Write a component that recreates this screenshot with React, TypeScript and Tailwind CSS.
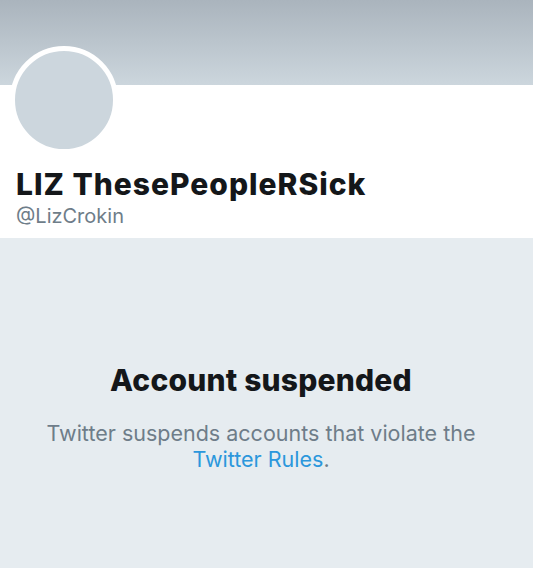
export default function App() {
  return (
    <div className="min-h-[568px] w-full bg-[#e6ecf0] font-['Inter','Liberation_Sans',sans-serif]">
      <div className="h-[85px] bg-gradient-to-b from-[#aab4bd] to-[#ccd6dd]" />

      <div className="flex flex-col items-start bg-white px-[10px] pb-[9px]">
        <div className="-mt-[39px] h-[108px] w-[108px] rounded-full border-[5px] border-white bg-[#ccd6dd]" />
        <div className="px-[6px]">
          <h1 className="mt-[13px] text-[30px] font-extrabold leading-[34px] tracking-[1px] text-[#14171a]">
            LIZ ThesePeopleRSick
          </h1>
          <p className="mt-[3px] text-[20px] leading-[25px] text-[#6e7d89]">@LizCrokin</p>
        </div>
      </div>

      <div className="pl-[16px] pr-[27px] pt-[124px] text-center">
        <h2 className="text-[30px] font-extrabold leading-[36px] tracking-[0.2px] text-[#14171a]">
          Account suspended
        </h2>
        <p className="mt-[22px] text-[21.5px] leading-[26px] text-[#6e7d89]">
          Twitter suspends accounts that violate the{" "}
          <span className="text-[#2b97dc]">Twitter Rules</span>.
        </p>
      </div>
    </div>
  );
}
